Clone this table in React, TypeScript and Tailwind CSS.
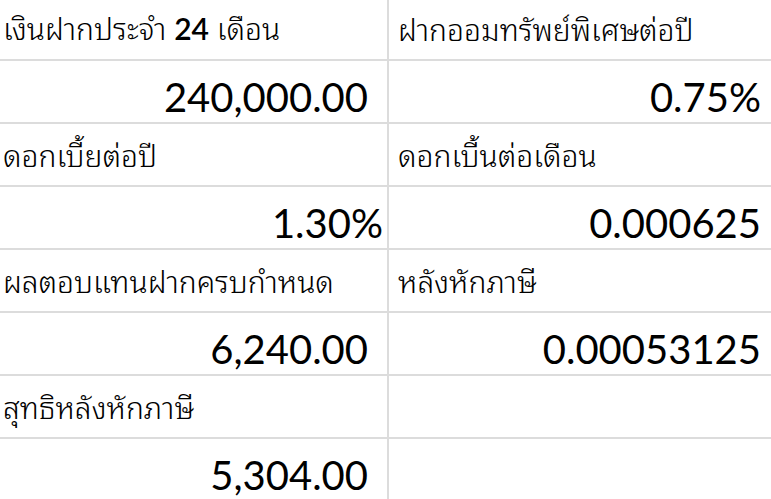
type Row = { left: React.ReactNode; right: React.ReactNode; kind: 'label' | 'value'; leftPr?: string };

const rows: Row[] = [
  {
    kind: 'label',
    left: <>เงินฝากประจำ <span className="font-semibold font-['Lato',sans-serif]">24</span> เดือน</>,
    right: 'ฝากออมทรัพย์พิเศษต่อปี',
  },
  { kind: 'value', left: '240,000.00', right: '0.75%', leftPr: 'pr-[19px]' },
  { kind: 'label', left: 'ดอกเบี้ยต่อปี', right: 'ดอกเบี้นต่อเดือน' },
  { kind: 'value', left: '1.30%', right: '0.000625', leftPr: 'pr-[4px]' },
  { kind: 'label', left: 'ผลตอบแทนฝากครบกำหนด', right: 'หลังหักภาษี' },
  { kind: 'value', left: '6,240.00', right: '0.00053125', leftPr: 'pr-[19px]' },
  { kind: 'label', left: 'สุทธิหลังหักภาษี', right: '' },
  { kind: 'value', left: '5,304.00', right: '', leftPr: 'pr-[19px]' },
];

const thai = "font-['Noto_Sans_Thai_Looped',sans-serif] font-light text-[30px] leading-none whitespace-nowrap";
const num = "font-['Lato',sans-serif] text-[40px] leading-none";

export default function App() {
  return (
    <div className="w-[771px] h-[499px] overflow-hidden bg-white text-black">
      <div className="grid grid-cols-[389px_1fr]">
        {rows.map((r, i) => {
          const h = i === 0 ? 'h-[61px]' : 'h-[63px]';
          if (r.kind === 'label') {
            return (
              <div key={i} className="contents">
                <div className={`${h} ${thai} border-b-2 border-r-2 border-[#dcdcdc] flex items-end pl-[3px] pb-[16px]`}>
                  <span>{r.left}</span>
                </div>
                <div className={`${h} ${thai} border-b-2 border-[#dcdcdc] flex items-end pl-[9px] pb-[16px]`}>
                  <span>{r.right}</span>
                </div>
              </div>
            );
          }
          return (
            <div key={i} className="contents">
              <div className={`${h} ${num} border-b-2 border-r-2 border-[#dcdcdc] flex items-end justify-end ${r.leftPr} pb-[5px]`}>
                {r.left}
              </div>
              <div className={`${h} ${num} border-b-2 border-[#dcdcdc] flex items-end justify-end pr-[10px] pb-[5px]`}>
                {r.right}
              </div>
            </div>
          );
        })}
      </div>
    </div>
  );
}
